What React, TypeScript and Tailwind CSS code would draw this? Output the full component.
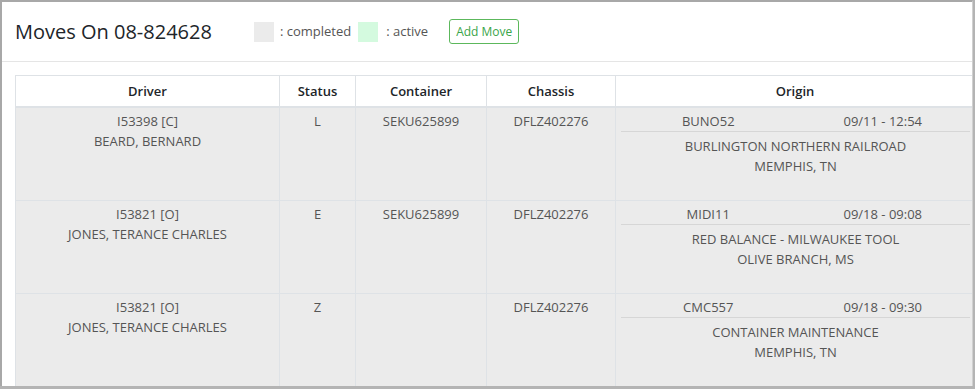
import type { ReactNode } from 'react'

type Move = {
  driverId: string
  driverName: string
  status: string
  container: string
  chassis: string
  originCode: string
  originTime: string
  originName: string
  originCity: string
}

const moves: Move[] = [
  {
    driverId: 'I53398 [C]',
    driverName: 'BEARD, BERNARD',
    status: 'L',
    container: 'SEKU625899',
    chassis: 'DFLZ402276',
    originCode: 'BUNO52',
    originTime: '09/11 - 12:54',
    originName: 'BURLINGTON NORTHERN RAILROAD',
    originCity: 'MEMPHIS, TN',
  },
  {
    driverId: 'I53821 [O]',
    driverName: 'JONES, TERANCE CHARLES',
    status: 'E',
    container: 'SEKU625899',
    chassis: 'DFLZ402276',
    originCode: 'MIDI11',
    originTime: '09/18 - 09:08',
    originName: 'RED BALANCE - MILWAUKEE TOOL',
    originCity: 'OLIVE BRANCH, MS',
  },
  {
    driverId: 'I53821 [O]',
    driverName: 'JONES, TERANCE CHARLES',
    status: 'Z',
    container: '',
    chassis: 'DFLZ402276',
    originCode: 'CMC557',
    originTime: '09/18 - 09:30',
    originName: 'CONTAINER MAINTENANCE',
    originCity: 'MEMPHIS, TN',
  },
]

function Th({ children, className = '' }: { children: ReactNode; className?: string }) {
  return (
    <th className={`border border-[#dee2e6] border-b-2 py-[5px] text-center text-[13px] font-semibold leading-5 text-[#212529] ${className}`}>
      {children}
    </th>
  )
}

function Td({ children, className = '' }: { children?: ReactNode; className?: string }) {
  return (
    <td className={`border border-[#dee2e6] px-[5px] pt-[3px] align-top text-center text-[13px] leading-5 text-[#555] ${className}`}>
      {children}
    </td>
  )
}

export default function App() {
  return (
    <div
      className="h-[389px] w-[975px] overflow-hidden bg-[#b4b4b4]"
      style={{ fontFamily: '"Open Sans", "Noto Sans", sans-serif' }}
    >
      <div className="h-[386px] w-[973px] overflow-hidden border-l-2 border-t-2 border-r border-[#a8a8a8] border-r-[#d0d0d0] bg-white">
        <div className="flex h-[60px] items-center border-b border-[#e5e5e5] pl-[13px]">
          <h1 className="text-[20px] font-normal leading-none text-[#212529]">Moves On 08-824628</h1>
          <div className="ml-[42px] flex items-center text-[13px] text-[#555]">
            <span className="h-5 w-5 bg-[#ebebeb]" />
            <span className="ml-[6px]">: completed</span>
            <span className="ml-[7px] h-5 w-5 bg-[#d4fadf]" />
            <span className="ml-[8px]">: active</span>
          </div>
          <button
            type="button"
            className="ml-[21px] rounded-[3px] border border-[#5cb85c] px-[6px] py-[3px] text-[12px] leading-[17px] text-[#3aa54a]"
          >
            Add Move
          </button>
        </div>

        <div className="pl-[13px] pt-[13px]">
          <table className="w-[960px] table-fixed border-collapse">
            <colgroup>
              <col className="w-[264px]" />
              <col className="w-[76px]" />
              <col className="w-[131px]" />
              <col className="w-[129px]" />
              <col />
            </colgroup>
            <thead>
              <tr className="bg-white">
                <Th>Driver</Th>
                <Th>Status</Th>
                <Th>Container</Th>
                <Th>Chassis</Th>
                <Th>Origin</Th>
              </tr>
            </thead>
            <tbody>
              {moves.map((move, i) => (
                <tr key={i} className="h-[93px] bg-[#ebebeb]">
                  <Td>
                    <div>{move.driverId}</div>
                    <div>{move.driverName}</div>
                  </Td>
                  <Td>{move.status}</Td>
                  <Td>{move.container}</Td>
                  <Td>{move.chassis}</Td>
                  <Td className="pr-[4px]">
                    <div className="grid grid-cols-2 border-b border-[#d6d6d6]">
                      <span>{move.originCode}</span>
                      <span>{move.originTime}</span>
                    </div>
                    <div className="pt-[4px]">{move.originName}</div>
                    <div>{move.originCity}</div>
                  </Td>
                </tr>
              ))}
            </tbody>
          </table>
        </div>
      </div>
    </div>
  )
}
